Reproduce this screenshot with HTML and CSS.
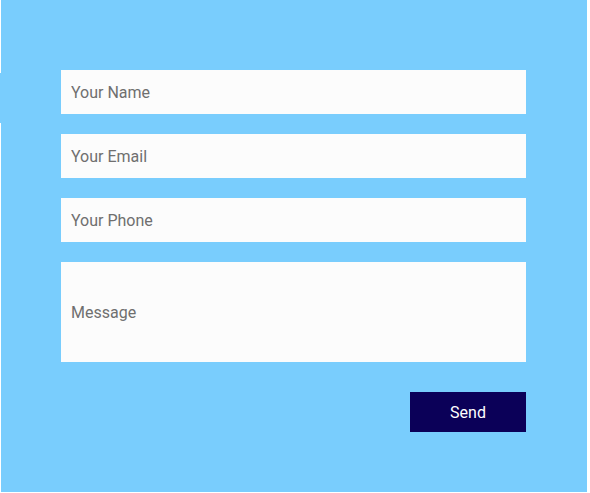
FILE: index.html
```html
<!DOCTYPE html>
<html>
<head>
<meta charset="utf-8">
<link rel="stylesheet" href="styles.css">
</head>
<body>
<div class="page">
  <span class="notch"></span>
  <form class="contact">
    <input class="field" type="text" placeholder="Your Name">
    <input class="field" type="email" placeholder="Your Email">
    <input class="field" type="tel" placeholder="Your Phone">
    <input class="field message" type="text" placeholder="Message">
    <div class="actions">
      <button class="send" type="button">Send</button>
    </div>
  </form>
</div>
</body>
</html>
```
FILE: styles.css
```css
html, body {
  margin: 0;
  padding: 0;
  background: #ffffff;
}
.page {
  position: relative;
  margin-left: 1px;
  width: 586px;
  height: 492px;
  background: #79cdfd;
  box-sizing: border-box;
  padding: 70px 60px 0 60px;
}
.notch {
  position: absolute;
  left: -1px;
  top: 73px;
  width: 1px;
  height: 50px;
  background: #79cdfd;
}
.contact {
  display: flex;
  flex-direction: column;
  gap: 20px;
  width: 465px;
}
.field {
  display: block;
  width: 465px;
  height: 44px;
  box-sizing: border-box;
  border: none;
  outline: none;
  margin: 0;
  padding: 0 10px;
  background: #fcfcfc;
  font-family: Roboto, "Liberation Sans", sans-serif;
  font-size: 16px;
  color: #333;
}
.field::placeholder {
  color: #6f6f6f;
}
.message {
  height: 100px;
}
.actions {
  display: flex;
  justify-content: flex-end;
  margin-top: 10px;
}
.send {
  width: 116px;
  height: 40px;
  border: none;
  margin: 0;
  padding: 0;
  background: #0b0058;
  color: #ffffff;
  font-family: Roboto, "Liberation Sans", sans-serif;
  font-size: 16px;
}
```
